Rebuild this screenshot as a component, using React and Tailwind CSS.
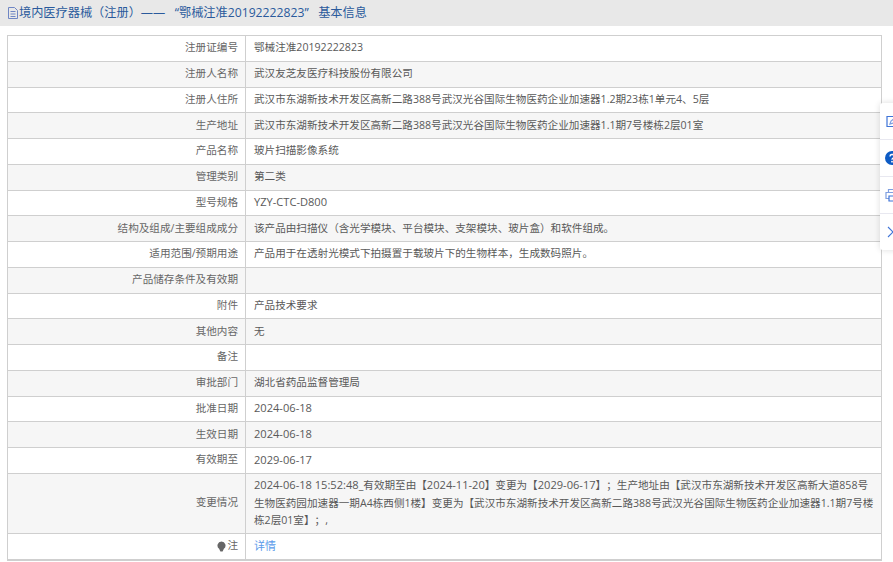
const L = ({ children }) => <span className="text-[11.1px]">{children}</span>;

const rows = [
  ["注册证编号", "鄂械注准20192222823"],
  ["注册人名称", "武汉友芝友医疗科技股份有限公司"],
  ["注册人住所", "武汉市东湖新技术开发区高新二路388号武汉光谷国际生物医药企业加速器1.2期23栋1单元4、5层"],
  ["生产地址", "武汉市东湖新技术开发区高新二路388号武汉光谷国际生物医药企业加速器1.1期7号楼栋2层01室"],
  ["产品名称", "玻片扫描影像系统"],
  ["管理类别", "第二类"],
  ["型号规格", <L>YZY-CTC-D800</L>],
  ["结构及组成/主要组成成分", "该产品由扫描仪（含光学模块、平台模块、支架模块、玻片盒）和软件组成。"],
  ["适用范围/预期用途", "产品用于在透射光模式下拍摄置于载玻片下的生物样本，生成数码照片。"],
  ["产品储存条件及有效期", ""],
  ["附件", "产品技术要求"],
  ["其他内容", "无"],
  ["备注", ""],
  ["审批部门", "湖北省药品监督管理局"],
  ["批准日期", <L>2024-06-18</L>],
  ["生效日期", <L>2024-06-18</L>],
  ["有效期至", <L>2029-06-17</L>],
];

function Row({ label, children, odd, h = "h-[25.75px]", last }) {
  return (
    <div className={`flex ${h} ${last ? "" : "border-b border-[#cfcfcf]"} ${odd ? "bg-[#f6f6f6]" : "bg-white"}`}>
      <div className="w-[238px] shrink-0 flex items-center justify-end pr-[7px] pb-[0.3px] border-r border-[#cfcfcf] text-[#666]">{label}</div>
      <div className="flex-1 flex items-center pl-[8px] pb-[0.3px] text-[#595959]">{children}</div>
    </div>
  );
}

export default function App() {
  return (
    <div className="relative w-[893px] h-[562px] overflow-hidden bg-white text-[10.6px] [text-spacing-trim:space-all] font-['Open_Sans','Noto_Sans_CJK_SC',sans-serif]">
      <div className="h-[26px] bg-[#e8e8e8] flex items-center pl-[7px] text-[12.2px] text-[#2a5a9c] whitespace-pre">
        <svg width="12" height="14" viewBox="0 0 12 14" fill="none" stroke="#6f86c4" strokeWidth="1">
          <path d="M1.5 1.5h6l3 3v8h-9z" /><path d="M3.5 5.5h5M3.5 8h5M3.5 10.5h5" />
        </svg>
        境内医疗器械（注册）——   “鄂械注准20192222823”   基本信息
      </div>
      <div className="ml-[7px] mt-[9px] w-[875px] border border-[#cfcfcf] border-b-2">
        {rows.map(([l, v], i) => (
          <Row key={l} label={l} odd={i % 2 === 1}>{v}</Row>
        ))}
        <Row label="变更情况" odd h="h-[60px]">
          <div className="leading-[17.6px] whitespace-nowrap">
            <L>2024-06-18 15:52:48</L>_有效期至由【<L>2024-11-20</L>】变更为【<L>2029-06-17</L>】；生产地址由【武汉市东湖新技术开发区高新大道858号<br />
            生物医药园加速器一期A4栋西侧1楼】变更为【武汉市东湖新技术开发区高新二路388号武汉光谷国际生物医药企业加速器1.1期7号楼<br />
            栋2层01室】；,
          </div>
        </Row>
        <Row label={<span className="flex items-center gap-[1px]"><svg width="9" height="11" viewBox="0 0 9 11"><path d="M4.5 0.5a4 4 0 0 1 2.4 7.2L5.6 10.5H3.4L2.1 7.7A4 4 0 0 1 4.5 0.5z" fill="#666" /></svg>注</span>} h="h-[25px]" last>
          <span className="text-[#5b9bea] text-[11px]">详情</span>
        </Row>
      </div>
      <div className="absolute left-[880px] top-[103px] w-[40px] h-[147px] bg-white rounded-l-[3px] shadow-[0_0_6px_rgba(0,0,0,0.14)] flex flex-col">
        <div className="h-[37px] flex items-center pl-[6px] border-b border-[#e8e8f0]">
          <svg width="14" height="14" viewBox="0 0 14 14" fill="none" stroke="#3f74d8" strokeWidth="1.2"><path d="M1 2.5h12v10H1z" /><path d="M4 10l1-3 5-4 2 2-5 4z" stroke="#7f9fe0" /></svg>
        </div>
        <div className="h-[37px] flex items-center pl-[5px] border-b border-[#e8e8f0]">
          <svg width="14" height="14" viewBox="0 0 14 14" aria-label="?"><circle cx="7" cy="7" r="7" fill="#0d5bc4" /><path d="M5 5.5a2 2 0 1 1 3 1.7c-.7.4-1 .8-1 1.5" fill="none" stroke="#fff" strokeWidth="1.4" /><circle cx="7" cy="10.7" r="0.9" fill="#fff" /></svg>
        </div>
        <div className="h-[37px] flex items-center pl-[5px] border-b border-[#e8e8f0]">
          <svg width="14" height="14" viewBox="0 0 14 14" fill="none" stroke="#3f74d8" strokeWidth="1.2"><path d="M3.5 4V1.5h8V4" stroke="#7f9fe0" /><path d="M1 4.5h12v6H1z" stroke="#7f9fe0" /><path d="M4 8h8v5H4z" fill="#fff" /></svg>
        </div>
        <div className="flex-1 flex items-center pl-[7px]">
          <svg width="12" height="12" viewBox="0 0 12 12" fill="none" stroke="#3f74d8" strokeWidth="1.1"><path d="M1 1l10 10M11 1L1 11" /></svg>
        </div>
      </div>
    </div>
  );
}
